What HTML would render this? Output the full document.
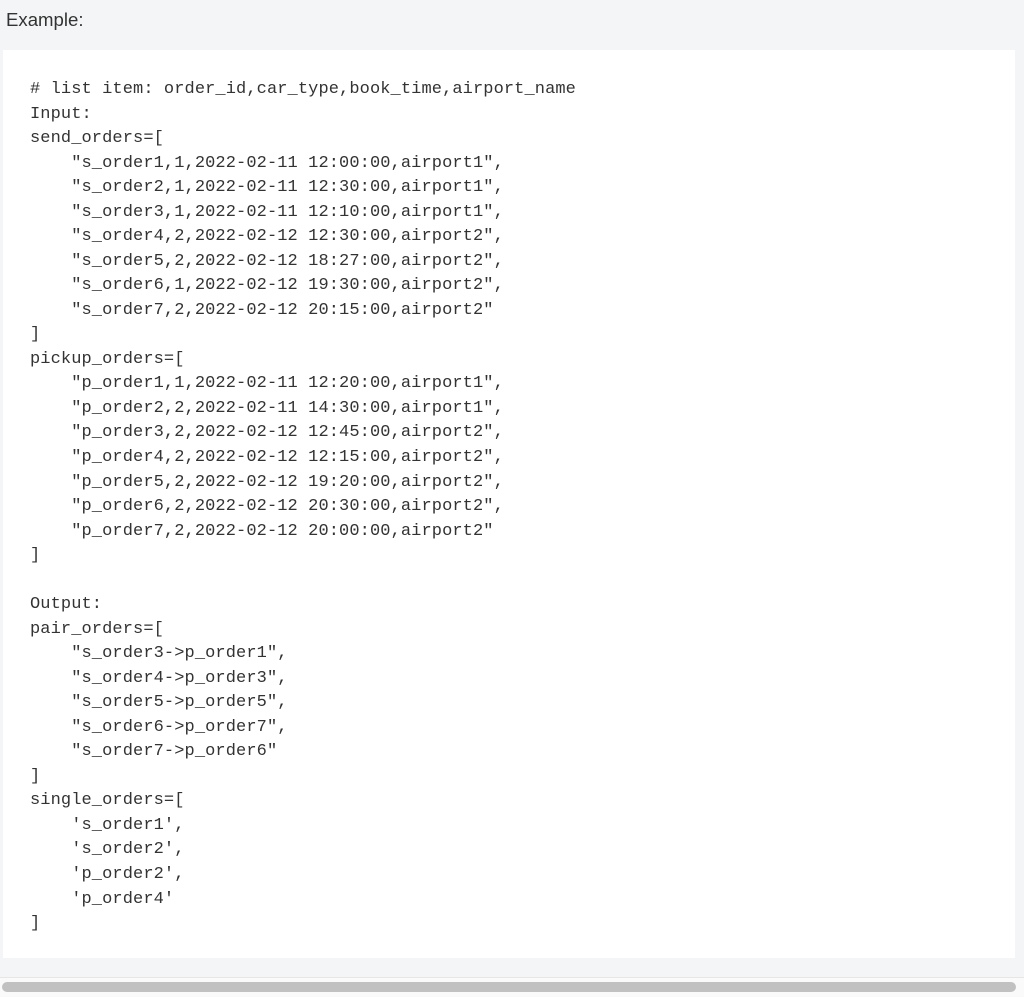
<!DOCTYPE html>
<html><head><meta charset="utf-8"><style>
html,body{margin:0;padding:0;width:1024px;height:996px;overflow:hidden;background:#f3f5f6;}
.t{position:absolute;left:6px;top:9px;font:18.6px "Liberation Sans",sans-serif;color:#333;}
.box{position:absolute;left:3px;top:50px;width:1012px;height:908px;background:#fff;}
pre{position:absolute;left:30px;top:78px;margin:0;font:17px/24.53px "Liberation Mono",monospace;color:#333;letter-spacing:0.1px;}
.bot{position:absolute;left:0;top:977px;width:1024px;height:19px;background:#fafafa;border-top:1px solid #e6e6e6;}
.sb{position:absolute;left:2px;top:982px;width:1014px;height:10px;background:#c1c1c1;border-radius:5px;}
</style></head><body>
<div class="t">Example:</div>
<div class="box"></div>
<pre># list item: order_id,car_type,book_time,airport_name
Input:
send_orders=[
    "s_order1,1,2022-02-11 12:00:00,airport1",
    "s_order2,1,2022-02-11 12:30:00,airport1",
    "s_order3,1,2022-02-11 12:10:00,airport1",
    "s_order4,2,2022-02-12 12:30:00,airport2",
    "s_order5,2,2022-02-12 18:27:00,airport2",
    "s_order6,1,2022-02-12 19:30:00,airport2",
    "s_order7,2,2022-02-12 20:15:00,airport2"
]
pickup_orders=[
    "p_order1,1,2022-02-11 12:20:00,airport1",
    "p_order2,2,2022-02-11 14:30:00,airport1",
    "p_order3,2,2022-02-12 12:45:00,airport2",
    "p_order4,2,2022-02-12 12:15:00,airport2",
    "p_order5,2,2022-02-12 19:20:00,airport2",
    "p_order6,2,2022-02-12 20:30:00,airport2",
    "p_order7,2,2022-02-12 20:00:00,airport2"
]

Output:
pair_orders=[
    "s_order3->p_order1",
    "s_order4->p_order3",
    "s_order5->p_order5",
    "s_order6->p_order7",
    "s_order7->p_order6"
]
single_orders=[
    's_order1',
    's_order2',
    'p_order2',
    'p_order4'
]</pre>
<div class="bot"></div>
<div class="sb"></div>
</body></html>
